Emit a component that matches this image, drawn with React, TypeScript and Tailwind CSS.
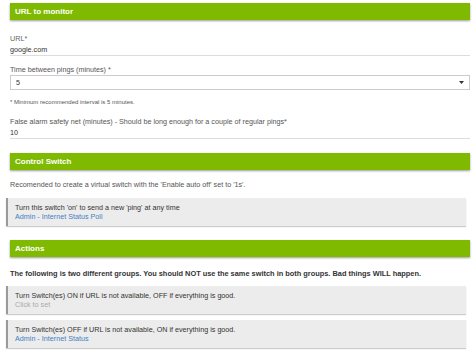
import React from "react";

function Header({ title }: { title: string }) {
  return (
    <div className="ml-[10px] mr-[4px] h-[17px] bg-[#7fba00] flex items-center pl-[5px] text-white font-bold text-[8px] shadow-[0_1px_2px_rgba(0,0,0,0.4)]">
      {title}
    </div>
  );
}

function Box({ line, link, linkClass }: { line: string; link: string; linkClass: string }) {
  return (
    <div className="ml-[6px] mr-[8px] h-[28px] bg-[#ececec] border-l-2 border-[#9a9a9a] shadow-[0_1px_1px_rgba(0,0,0,0.2)] pl-[7px] pt-[5px] flex flex-col leading-[9px] text-[7.2px]">
      <div className="text-[#333]">{line}</div>
      <div className={linkClass}>{link}</div>
    </div>
  );
}

export default function App() {
  return (
    <div
      className="w-[474px] h-[350px] bg-white overflow-hidden pt-[3px]"
      style={{ fontFamily: '"Liberation Sans", Arial, sans-serif' }}
    >
      <Header title="URL to monitor" />
      <div className="ml-[10px] mr-[4px] mt-[14px] text-[7.2px] leading-[10px]">
        <div className="text-[#666]">URL*</div>
        <div className="mt-[1px] text-[#333] border-b border-[#ddd]">google.com</div>
      </div>
      <div className="ml-[10px] mr-[4px] mt-[9px] text-[7.2px] leading-[10px]">
        <div className="text-[#555]">Time between pings (minutes) *</div>
        <div className="h-[15px] border border-[#ccc] flex items-center justify-between pl-[5px] pr-[5px] text-[#333]">
          <span>5</span>
          <svg width="5" height="3" viewBox="0 0 5 3"><path d="M0 0H5L2.5 3Z" fill="#333" /></svg>
        </div>
      </div>
      <div className="ml-[10px] mt-[8px] text-[6px] leading-[8px] text-[#555]">
        * Minimum recommended interval is 5 minutes.
      </div>
      <div className="ml-[10px] mr-[4px] mt-[11px] text-[7.2px] leading-[10px]">
        <div className="text-[#555]">False alarm safety net (minutes) - Should be long enough for a couple of regular pings*</div>
        <div className="mt-[1px] text-[#333] border-b border-[#ddd]">10</div>
      </div>
      <div className="mt-[14px]">
        <Header title="Control Switch" />
      </div>
      <div className="ml-[10px] mt-[10px] text-[7.2px] leading-[10px] text-[#555]">
        Recomended to create a virtual switch with the 'Enable auto off' set to '1s'.
      </div>
      <div className="mt-[8px]">
        <Box
          line="Turn this switch 'on' to send a new 'ping' at any time"
          link="Admin - Internet Status Poll"
          linkClass="text-[#3f7fc4]"
        />
      </div>
      <div className="mt-[14px]">
        <Header title="Actions" />
      </div>
      <div className="ml-[10px] mt-[12px] text-[7.4px] leading-[10px] font-bold text-[#333]">
        The following is two different groups. You should NOT use the same switch in both groups. Bad things WILL happen.
      </div>
      <div className="mt-[7px]">
        <Box
          line="Turn Switch(es) ON if URL is not available, OFF if everything is good."
          link="Click to set"
          linkClass="text-[#aaa]"
        />
      </div>
      <div className="mt-[6px]">
        <Box
          line="Turn Switch(es) OFF if URL is not available, ON if everything is good."
          link="Admin - Internet Status"
          linkClass="text-[#3f7fc4]"
        />
      </div>
    </div>
  );
}
